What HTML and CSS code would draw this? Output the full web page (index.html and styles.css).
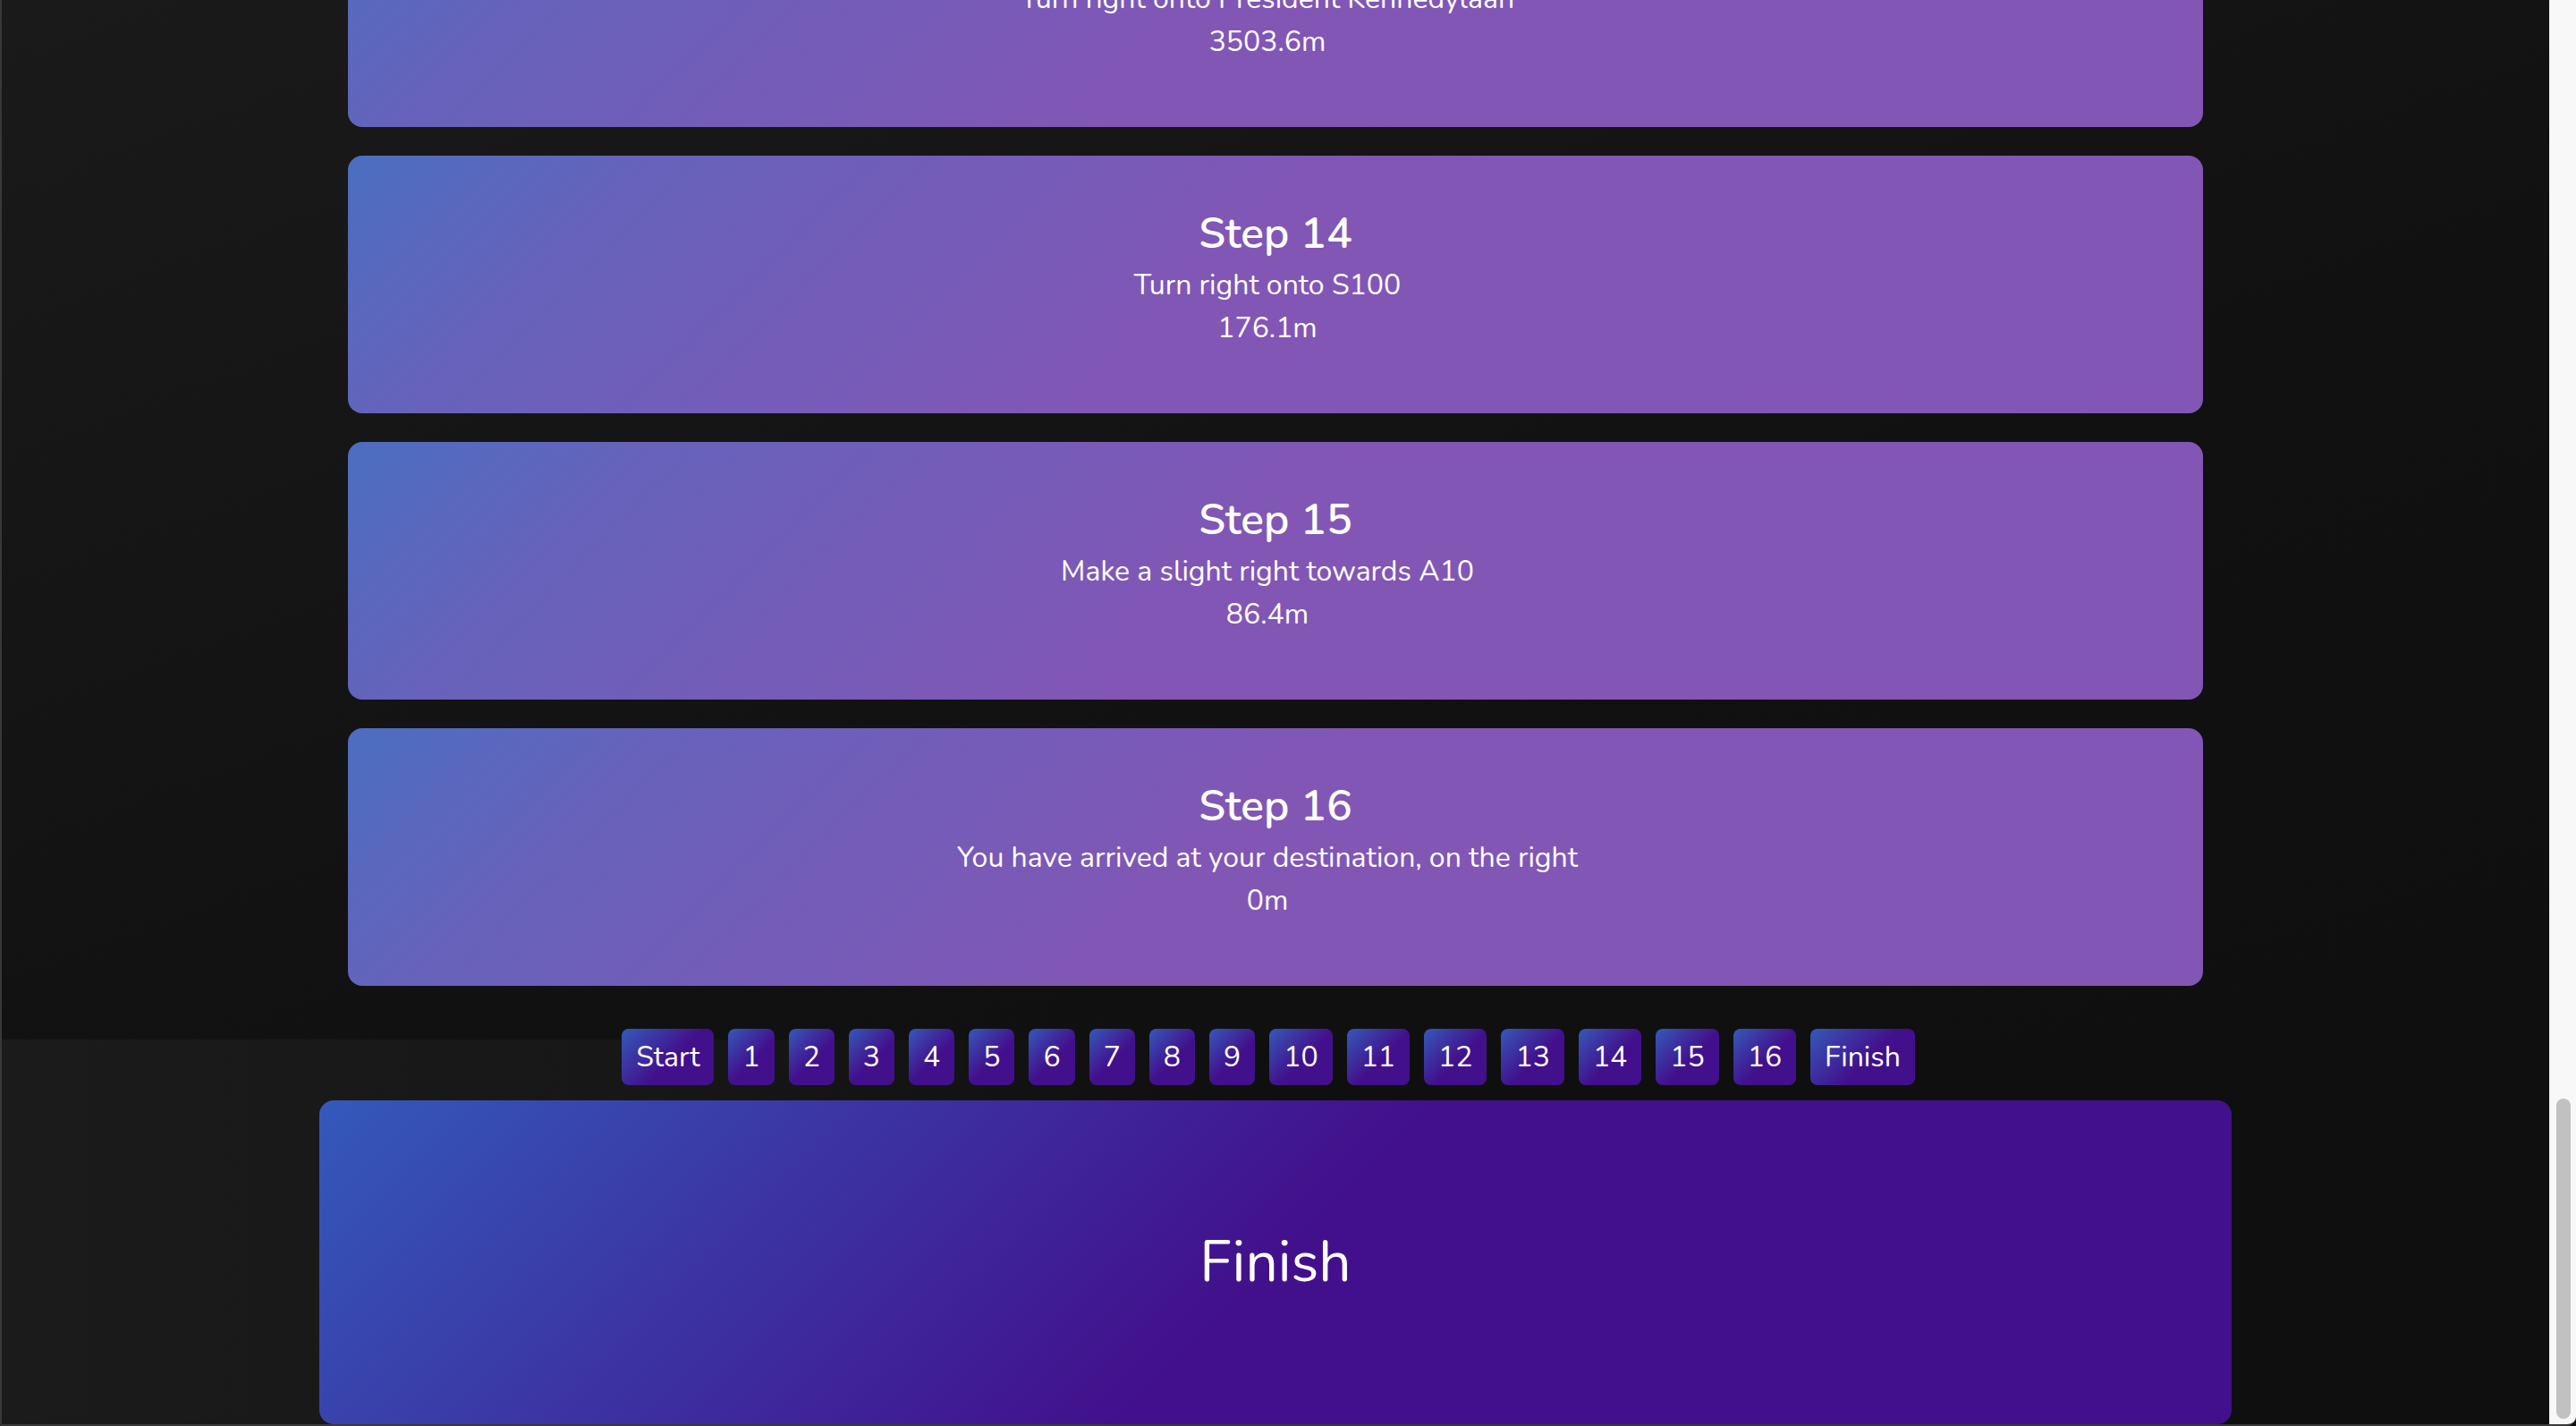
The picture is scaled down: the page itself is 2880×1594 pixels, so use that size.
FILE: index.html
```html
<!DOCTYPE html>
<html lang="en">
<head>
<meta charset="utf-8">
<title>Route directions</title>
<link rel="stylesheet" href="styles.css">
</head>
<body>
<div class="window">
  <main class="page">
    <section class="steps">
      <article class="step step-first">
        <h2 class="step-title">Step 13</h2>
        <p class="step-text">Turn right onto President Kennedylaan</p>
        <p class="step-text">3503.6m</p>
      </article>
      <article class="step">
        <h2 class="step-title">Step 14</h2>
        <p class="step-text">Turn right onto S100</p>
        <p class="step-text">176.1m</p>
      </article>
      <article class="step">
        <h2 class="step-title">Step 15</h2>
        <p class="step-text">Make a slight right towards A10</p>
        <p class="step-text">86.4m</p>
      </article>
      <article class="step">
        <h2 class="step-title">Step 16</h2>
        <p class="step-text">You have arrived at your destination, on the right</p>
        <p class="step-text">0m</p>
      </article>
    </section>
    <section class="finish-section">
      <nav class="step-nav">
        <a class="nav-btn">Start</a>
        <a class="nav-btn">1</a>
        <a class="nav-btn">2</a>
        <a class="nav-btn">3</a>
        <a class="nav-btn">4</a>
        <a class="nav-btn">5</a>
        <a class="nav-btn">6</a>
        <a class="nav-btn">7</a>
        <a class="nav-btn">8</a>
        <a class="nav-btn">9</a>
        <a class="nav-btn">10</a>
        <a class="nav-btn">11</a>
        <a class="nav-btn">12</a>
        <a class="nav-btn">13</a>
        <a class="nav-btn">14</a>
        <a class="nav-btn">15</a>
        <a class="nav-btn">16</a>
        <a class="nav-btn">Finish</a>
      </nav>
      <div class="finish-card">
        <h1 class="finish-title">Finish</h1>
      </div>
    </section>
  </main>
  <div class="scrollbar"><div class="scroll-thumb"></div></div>
</div>
</body>
</html>
```

FILE: styles.css
```css
html, body {
  margin: 0;
  padding: 0;
  height: 100%;
  overflow: hidden;
  background: #0f0f0f;
}

body {
  font-family: "Nunito", "Lato", "Noto Sans", sans-serif;
  color: #ffffff;
}

.window {
  display: flex;
  height: 1594px;
  box-sizing: border-box;
  border-left: 2px solid #383838;
  border-bottom: 2px solid #3a3a3a;
  border-bottom-right-radius: 10px;
  overflow: hidden;
}

.page {
  flex: 1;
  display: flex;
  flex-direction: column;
  min-width: 0;
}

.steps {
  display: flex;
  flex-direction: column;
  align-items: center;
  gap: 32px;
  padding-bottom: 60px;
  background: linear-gradient(160deg, #1a1a1a 0%, #111111 60%, #0f0f0f 100%);
}

.step {
  box-sizing: border-box;
  width: 2074px;
  height: 288px;
  padding: 59px 32px 0;
  border-radius: 16px;
  text-align: center;
  background: linear-gradient(135deg, #4b6ec0 0%, #6762bb 15%, #8256b5 48%, #8256b5 100%);
}

.step-first {
  margin-top: -146px;
}

.step-title {
  margin: 0 0 6px;
  font-size: 48px;
  line-height: 56px;
  font-weight: 600;
}

.step-text {
  margin: 0;
  padding-right: 18px;
  font-size: 32px;
  line-height: 48px;
  font-weight: 400;
}

.finish-section {
  flex: 1;
  display: flex;
  flex-direction: column;
  align-items: center;
  background: linear-gradient(to right, #1b1b1b 0%, #171717 25%, #0f0f0f 50%);
}

.step-nav {
  display: flex;
  justify-content: center;
  gap: 16px;
  margin-top: -12px;
  padding-right: 16px;
}

.nav-btn {
  display: block;
  padding: 12px 16px;
  font-size: 32px;
  line-height: 39px;
  border-radius: 8px;
  color: #ffffff;
  background: linear-gradient(135deg, #3559ba 0%, #42108c 55%, #42108c 100%);
}

.finish-card {
  flex: 1;
  box-sizing: border-box;
  width: 2138px;
  margin-top: 17px;
  border-radius: 16px;
  display: flex;
  align-items: center;
  justify-content: center;
  background: linear-gradient(135deg, #3459bb 0%, #3b38a5 22%, #42108c 50%, #42108c 100%);
}

.finish-title {
  margin: 0;
  font-size: 64px;
  font-weight: 400;
}

.scrollbar {
  flex: none;
  width: 30px;
  box-sizing: border-box;
  background: #f8f8f8;
  border-left: 1px solid #ebebeb;
  display: flex;
  flex-direction: column;
  justify-content: flex-end;
  padding: 0 6px 6px 7px;
}

.scroll-thumb {
  height: 358px;
  border-radius: 8px;
  background: #c1c1c1;
}
```
